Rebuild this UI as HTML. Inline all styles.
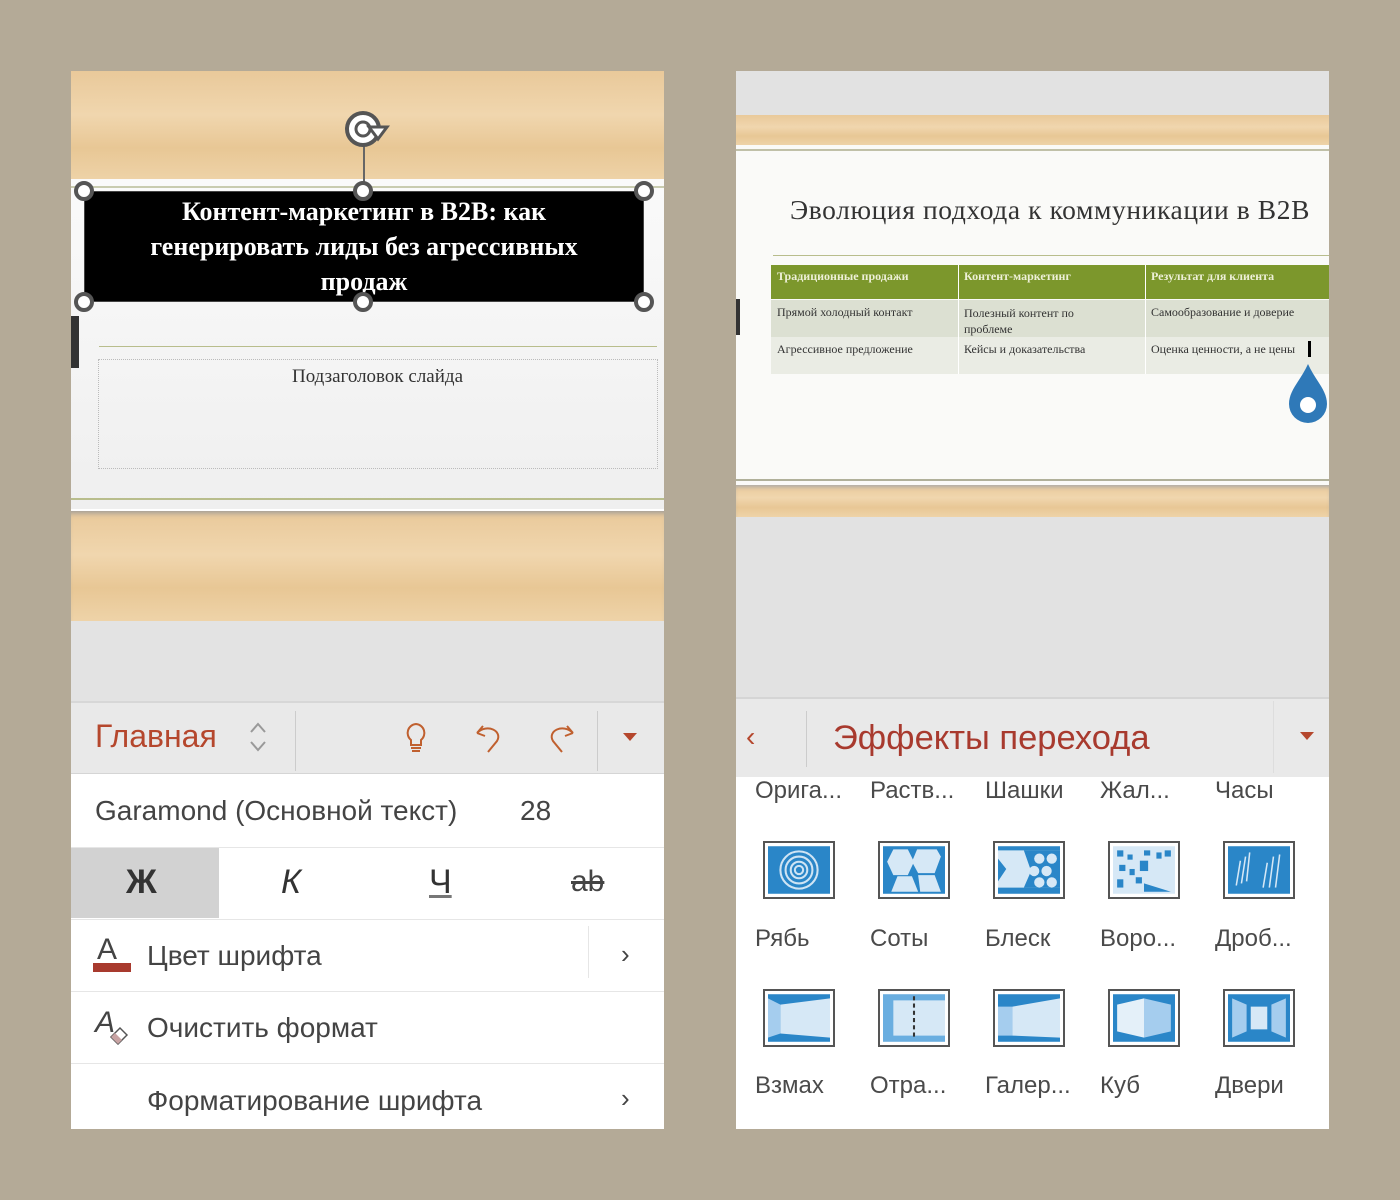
<!DOCTYPE html>
<html><head><meta charset="utf-8"><style>
*{margin:0;padding:0;box-sizing:border-box}
body{width:1400px;height:1200px;background:#b4aa97;position:relative;overflow:hidden;font-family:"Liberation Sans",sans-serif}
.a{position:absolute}
.wood{background:linear-gradient(180deg,#e9c99a,#f0d6ae 40%,#e8c795 70%,#eed3a8)}
.serif{font-family:"Liberation Serif",serif}
.t{color:#444;font-size:26px;position:absolute}
.h{position:absolute;width:20px;height:20px;border-radius:50%;background:#fff;border:4px solid #555}
.lbl{position:absolute;font-size:24px;color:#4a4a4a}
.ic{position:absolute;width:72px;height:58px;border:2px solid #555;background:#fff;padding:3px}
.ic svg{display:block;width:100%;height:100%}
</style></head><body>

<!-- LEFT PANEL -->
<div class="a" style="left:71px;top:71px;width:593px;height:1058px;background:#fff;overflow:hidden">
  <div class="a wood" style="left:0;top:0;width:593px;height:110px"></div>
  <div class="a" style="left:0;top:108px;width:593px;height:330px;background:linear-gradient(180deg,#fafafa,#efefef)"></div>
  <div class="a" style="left:0;top:115px;width:593px;height:2px;background:#c9ccb0"></div>
  <div class="a" style="left:28px;top:275px;width:558px;height:1px;background:#b8bd8c"></div>
  <div class="a" style="left:27px;top:288px;width:560px;height:110px;border:1px dotted #bbb"></div>
  <div class="a serif" style="left:0;top:295px;width:613px;text-align:center;font-size:19px;color:#333">Подзаголовок слайда</div>
  <div class="a" style="left:0;top:427px;width:593px;height:2px;background:#b8bd8c"></div>
  <div class="a wood" style="left:0;top:440px;width:593px;height:110px;box-shadow:inset 0 6px 6px -4px #999"></div>
  <div class="a" style="left:0;top:550px;width:593px;height:80px;background:#e3e3e3"></div>
  <div class="a" style="left:0;top:245px;width:8px;height:52px;background:#333"></div>
  <!-- title box -->
  <div class="a" style="left:13px;top:120px;width:560px;height:111px;background:#000;border:1px solid #444"></div>
  <div class="a serif" style="left:52px;top:123px;width:482px;text-align:center;color:#fff;font-size:26px;line-height:35px;font-weight:bold">Контент-маркетинг в B2B: как генерировать лиды без агрессивных продаж</div>
  <div class="a" style="left:292px;top:70px;width:2px;height:50px;background:#666"></div>
  <svg class="a" style="left:270px;top:38px" width="52" height="40" viewBox="0 0 52 40"><circle cx="22" cy="20" r="16" fill="#fff" stroke="#555" stroke-width="4"/><circle cx="22" cy="20" r="7" fill="none" stroke="#555" stroke-width="3"/><path d="M28 18 L46 18 L37 30 Z" fill="#fff" stroke="#555" stroke-width="3"/></svg>
  <div class="h" style="left:3px;top:110px"></div><div class="h" style="left:282px;top:110px"></div><div class="h" style="left:563px;top:110px"></div>
  <div class="h" style="left:3px;top:221px"></div><div class="h" style="left:282px;top:221px"></div><div class="h" style="left:563px;top:221px"></div>
  <!-- toolbar -->
  <div class="a" style="left:0;top:630px;width:593px;height:73px;background:#e9e9e9;border-top:2px solid #d7d7d7;border-bottom:1px solid #d5d5d5"></div>
  <div class="a" style="left:24px;top:647px;font-size:32px;color:#b5472d">Главная</div>
  <svg class="a" style="left:177px;top:650px" width="20" height="32" viewBox="0 0 20 32"><path d="M3 11 L10 3 L17 11 M3 21 L10 29 L17 21" fill="none" stroke="#999" stroke-width="2"/></svg>
  <div class="a" style="left:224px;top:640px;width:1px;height:60px;background:#ccc"></div>
  <div class="a" style="left:526px;top:640px;width:1px;height:60px;background:#ccc"></div>
  <svg class="a" style="left:330px;top:650px" width="30" height="34" viewBox="0 0 30 34"><path d="M15 3 a9 9 0 0 1 5 16 l0 5 l-10 0 l0 -5 a9 9 0 0 1 5 -16 z M10 27 h10 M11 30 h8" fill="none" stroke="#c0602f" stroke-width="2"/></svg>
  <svg class="a" style="left:402px;top:650px" width="32" height="34" viewBox="0 0 32 34"><path d="M4 12 L10 5 M4 12 L12 15 M4 12 C14 2 30 10 24 20 L15 31" fill="none" stroke="#c0602f" stroke-width="2"/></svg>
  <svg class="a" style="left:474px;top:650px" width="32" height="34" viewBox="0 0 32 34"><path d="M28 12 L22 5 M28 12 L20 15 M28 12 C18 2 2 10 8 20 L17 31" fill="none" stroke="#c0602f" stroke-width="2"/></svg>
  <svg class="a" style="left:552px;top:662px" width="14" height="10"><path d="M0 0 L14 0 L7 8 Z" fill="#b5472d"/></svg>
  <!-- rows -->
  <div class="t" style="left:24px;top:724px;font-size:28px">Garamond (Основной текст)</div>
  <div class="t" style="left:449px;top:724px;font-size:28px">28</div>
  <div class="a" style="left:0;top:776px;width:593px;height:1px;background:#e6e6e6"></div>
  <div class="a" style="left:0;top:777px;width:148px;height:70px;background:#d2d2d2"></div>
  <div class="a" style="left:55px;top:792px;font-size:34px;font-weight:bold;color:#333">Ж</div>
  <div class="a" style="left:210px;top:792px;font-size:34px;font-style:italic;color:#333">К</div>
  <div class="a" style="left:358px;top:792px;font-size:34px;color:#333;text-decoration:underline;text-decoration-color:#777">Ч</div>
  <div class="a" style="left:500px;top:794px;font-size:30px;color:#444;text-decoration:line-through">ab</div>
  <div class="a" style="left:0;top:848px;width:593px;height:1px;background:#e6e6e6"></div>
  <div class="a" style="left:26px;top:862px;font-size:30px;color:#444">A</div>
  <div class="a" style="left:22px;top:892px;width:38px;height:9px;background:#a83a2e"></div>
  <div class="t" style="left:76px;top:869px;font-size:28px">Цвет шрифта</div>
  <div class="a" style="left:517px;top:855px;width:1px;height:52px;background:#e6e6e6"></div>
  <div class="t" style="left:550px;top:868px">›</div>
  <div class="a" style="left:0;top:920px;width:593px;height:1px;background:#e6e6e6"></div>
  <div class="a" style="left:24px;top:935px;font-size:30px;color:#444;font-style:italic">A</div>
  <svg class="a" style="left:36px;top:952px" width="24" height="22"><path d="M4 14 L13 5 L20 12 L11 21 Z" fill="#fff" stroke="#555" stroke-width="1.5"/><path d="M4 14 L8 10 L15 17 L11 21 Z" fill="#c8a3a3"/></svg>
  <div class="t" style="left:76px;top:941px;font-size:28px">Очистить формат</div>
  <div class="a" style="left:0;top:992px;width:593px;height:1px;background:#e6e6e6"></div>
  <div class="t" style="left:76px;top:1014px;font-size:28px">Форматирование шрифта</div>
  <div class="t" style="left:550px;top:1012px">›</div>
</div>

<!-- RIGHT PANEL -->
<div class="a" style="left:736px;top:71px;width:593px;height:1058px;background:#fff;overflow:hidden">
  <div class="a" style="left:0;top:0;width:593px;height:44px;background:#e2e2e2"></div>
  <div class="a wood" style="left:0;top:44px;width:593px;height:30px"></div>
  <div class="a" style="left:0;top:74px;width:593px;height:340px;background:#fafaf8"></div>
  <div class="a" style="left:0;top:78px;width:593px;height:2px;background:#c0c0a8"></div>
  <div class="a serif" style="left:54px;top:123px;font-size:27.5px;letter-spacing:0.6px;color:#333;white-space:nowrap">Эволюция подхода к коммуникации в B2B</div>
  <div class="a" style="left:37px;top:184px;width:556px;height:1px;background:#b8bd8c"></div>
  <div class="a serif" style="left:35px;top:194px;width:558px;height:34px;background:#7c972c;color:#eef0d8;font-size:12px;font-weight:bold">
    <span class="a" style="left:6px;top:4px">Традиционные продажи</span><span class="a" style="left:193px;top:4px">Контент-маркетинг</span><span class="a" style="left:380px;top:4px">Результат для клиента</span></div>
  <div class="a serif" style="left:35px;top:229px;width:558px;height:37px;background:#dce0d2;color:#333;font-size:12px">
    <span class="a" style="left:6px;top:5px">Прямой холодный контакт</span><span class="a" style="left:193px;top:5px;width:150px;line-height:16px">Полезный контент по проблеме</span><span class="a" style="left:380px;top:5px">Самообразование и доверие</span></div>
  <div class="a serif" style="left:35px;top:266px;width:558px;height:37px;background:#eaece4;color:#333;font-size:12px">
    <span class="a" style="left:6px;top:5px">Агрессивное предложение</span><span class="a" style="left:193px;top:5px">Кейсы и доказательства</span><span class="a" style="left:380px;top:5px">Оценка ценности, а не цены</span></div>
  <div class="a" style="left:222px;top:194px;width:1px;height:109px;background:#fff"></div>
  <div class="a" style="left:409px;top:194px;width:1px;height:109px;background:#fff"></div>
  <div class="a" style="left:572px;top:270px;width:3px;height:16px;background:#000"></div>
  <svg class="a" style="left:551px;top:291px" width="42" height="64" viewBox="0 0 42 64"><path d="M21 2 C28 18 40 28 40 42 A19 19 0 0 1 2 42 C2 28 14 18 21 2 Z" fill="#2f79b8"/><circle cx="21" cy="43" r="8" fill="#fff"/></svg>
  <div class="a" style="left:0;top:228px;width:4px;height:36px;background:#333"></div>
  <div class="a" style="left:0;top:408px;width:593px;height:2px;background:#b0b09a"></div>
  <div class="a wood" style="left:0;top:414px;width:593px;height:32px;box-shadow:inset 0 4px 4px -2px #aaa"></div>
  <div class="a" style="left:0;top:446px;width:593px;height:180px;background:#e2e2e2"></div>
  <div class="a" style="left:0;top:626px;width:593px;height:80px;background:#e9e9e9;border-top:2px solid #d5d5d5"></div>
  <div class="a" style="left:10px;top:650px;font-size:28px;color:#b5472d">‹</div>
  <div class="a" style="left:70px;top:640px;width:1px;height:56px;background:#ccc"></div>
  <div class="a" style="left:537px;top:630px;width:1px;height:72px;background:#ddd"></div>
  <div class="a" style="left:97px;top:648px;font-size:34.5px;color:#a83a2e">Эффекты перехода</div>
  <svg class="a" style="left:564px;top:661px" width="14" height="10"><path d="M0 0 L14 0 L7 8 Z" fill="#b5472d"/></svg>
  <!-- gallery labels -->
  <div class="lbl" style="left:19px;top:706px">Орига...</div><div class="lbl" style="left:134px;top:706px">Раств...</div><div class="lbl" style="left:249px;top:706px">Шашки</div><div class="lbl" style="left:364px;top:706px">Жал...</div><div class="lbl" style="left:479px;top:706px">Часы</div>
  <div class="lbl" style="left:19px;top:854px">Рябь</div><div class="lbl" style="left:134px;top:854px">Соты</div><div class="lbl" style="left:249px;top:854px">Блеск</div><div class="lbl" style="left:364px;top:854px">Воро...</div><div class="lbl" style="left:479px;top:854px">Дроб...</div>
  <div class="lbl" style="left:19px;top:1001px">Взмах</div><div class="lbl" style="left:134px;top:1001px">Отра...</div><div class="lbl" style="left:249px;top:1001px">Галер...</div><div class="lbl" style="left:364px;top:1001px">Куб</div><div class="lbl" style="left:479px;top:1001px">Двери</div>
  <!-- row 1 icons -->
  <div class="ic" style="left:27px;top:770px"><svg viewBox="0 0 60 46"><rect width="60" height="46" fill="#2a86c8"/><g fill="none" stroke="#cfe4f4" stroke-width="2"><circle cx="30" cy="23" r="18"/><circle cx="30" cy="23" r="13"/><circle cx="30" cy="23" r="8"/><circle cx="30" cy="23" r="4"/></g></svg></div>
  <div class="ic" style="left:142px;top:770px"><svg viewBox="0 0 60 46"><rect width="60" height="46" fill="#2a86c8"/><g fill="#d6e8f6"><path d="M10 3 L24 3 L30 15 L24 28 L10 28 L4 15Z"/><path d="M33 3 L52 3 L56 10 L50 26 L34 26 L28 15Z"/><path d="M14 29 L28 29 L34 44 L8 44Z"/><path d="M34 28 L50 28 L56 44 L36 44Z"/></g></svg></div>
  <div class="ic" style="left:257px;top:770px"><svg viewBox="0 0 60 46"><rect width="60" height="46" fill="#d6e8f6"/><g fill="#2a86c8"><path d="M0 0 L60 0 L60 4 L0 4Z M0 12 L8 22 L0 34Z M0 40 L60 40 L60 46 L0 46Z"/><path d="M25 4 L32 24 L25 40 L60 40 L60 4Z"/></g><g fill="#d6e8f6"><circle cx="40" cy="12" r="5"/><circle cx="52" cy="12" r="5"/><circle cx="35" cy="24" r="5"/><circle cx="47" cy="24" r="5"/><circle cx="40" cy="35" r="5"/><circle cx="52" cy="35" r="5"/></g></svg></div>
  <div class="ic" style="left:372px;top:770px"><svg viewBox="0 0 60 46"><rect width="60" height="46" fill="#d6e8f6"/><g fill="#2a86c8"><rect x="4" y="4" width="6" height="6"/><rect x="14" y="8" width="5" height="5"/><rect x="6" y="18" width="6" height="6"/><rect x="16" y="22" width="5" height="6"/><rect x="4" y="32" width="6" height="8"/><rect x="22" y="30" width="6" height="6"/><rect x="30" y="4" width="6" height="5"/><rect x="42" y="6" width="5" height="6"/><rect x="50" y="4" width="6" height="6"/><rect x="26" y="14" width="8" height="10"/><path d="M30 36 L56 44 L30 44Z"/></g></svg></div>
  <div class="ic" style="left:487px;top:770px"><svg viewBox="0 0 60 46"><rect width="60" height="46" fill="#2a86c8"/><g stroke="#d6e8f6" stroke-width="1.5"><path d="M8 38 L12 14 M13 36 L17 10 M18 34 L21 6 M34 40 L38 16 M40 40 L44 10 M46 40 L50 8"/></g></svg></div>
  <!-- row 2 icons -->
  <div class="ic" style="left:27px;top:918px"><svg viewBox="0 0 60 46"><rect width="60" height="46" fill="#d6e8f6"/><path d="M0 0 L60 0 L60 4 L12 10 L12 38 L60 42 L60 46 L0 46Z" fill="#2a86c8"/><path d="M0 4 L12 10 L12 38 L0 42Z" fill="#a5cdee"/></svg></div>
  <div class="ic" style="left:142px;top:918px"><svg viewBox="0 0 60 46"><rect width="60" height="46" fill="#d6e8f6"/><path d="M0 0 L60 0 L60 6 L10 6 L10 40 L60 40 L60 46 L0 46Z" fill="#6aaee0"/><path d="M30 2 L30 44" stroke="#333" stroke-width="2" stroke-dasharray="4 3"/></svg></div>
  <div class="ic" style="left:257px;top:918px"><svg viewBox="0 0 60 46"><rect width="60" height="46" fill="#d6e8f6"/><path d="M0 0 L60 0 L60 4 L14 12 L14 40 L60 42 L60 46 L0 46Z" fill="#2a86c8"/><path d="M0 12 L14 12 L14 40 L0 40Z" fill="#a5cdee"/></svg></div>
  <div class="ic" style="left:372px;top:918px"><svg viewBox="0 0 60 46"><rect width="60" height="46" fill="#2a86c8"/><path d="M4 10 L30 4 L30 42 L4 36Z" fill="#e4f0f9"/><path d="M30 4 L56 10 L56 36 L30 42Z" fill="#a5cdee"/></svg></div>
  <div class="ic" style="left:487px;top:918px"><svg viewBox="0 0 60 46"><rect width="60" height="46" fill="#2a86c8"/><path d="M4 4 L18 10 L18 36 L4 42Z M56 4 L42 10 L42 36 L56 42Z" fill="#a5cdee"/><rect x="22" y="12" width="16" height="22" fill="#d6e8f6"/></svg></div>
</div>
</body></html>
